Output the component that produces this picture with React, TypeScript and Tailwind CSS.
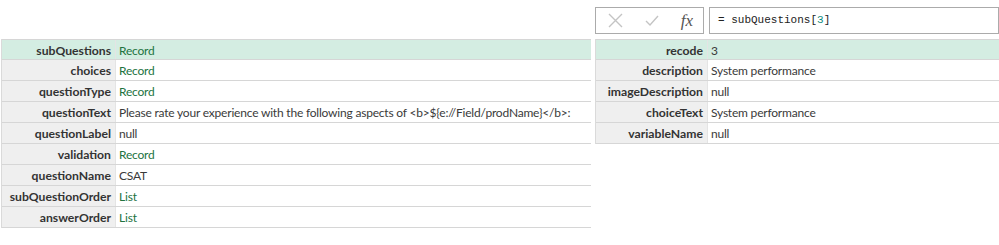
const leftRows = [
  { label: 'subQuestions', value: 'Record', link: true },
  { label: 'choices', value: 'Record', link: true },
  { label: 'questionType', value: 'Record', link: true },
  {
    label: 'questionText',
    value: 'Please rate your experience with the following aspects of <b>${e://Field/prodName}</b>:',
    link: false,
  },
  { label: 'questionLabel', value: 'null', link: false },
  { label: 'validation', value: 'Record', link: true },
  { label: 'questionName', value: 'CSAT', link: false },
  { label: 'subQuestionOrder', value: 'List', link: true },
  { label: 'answerOrder', value: 'List', link: true },
]

const rightRows = [
  { label: 'recode', value: '3', link: false },
  { label: 'description', value: 'System performance', link: false },
  { label: 'imageDescription', value: 'null', link: false },
  { label: 'choiceText', value: 'System performance', link: false },
  { label: 'variableName', value: 'null', link: false },
]

type Row = { label: string; value: string; link: boolean }

const RecordTable = ({ rows, labelWidth }: { rows: Row[]; labelWidth: string }) => {
  return (
    <div className="border-l border-[#dadada]">
      {rows.map((row, index) => {
        const first = index === 0
        return (
          <div
            key={index}
            className={`flex h-[21px] border-b border-[#d6d6d6] ${first ? 'bg-[#d4ede2] border-t' : ''}`}
          >
            <div
              className={`${labelWidth} shrink-0 text-right pr-[4px] font-bold text-[12.2px] text-[#333333] leading-[21px] border-r border-[#e4e4e4] ${
                first ? '' : 'bg-[#efefef]'
              }`}
            >
              {row.label}
            </div>
            <div
              className={`flex-1 pl-[3px] leading-[21px] whitespace-nowrap overflow-hidden tracking-[-0.2px] ${
                first ? '' : 'bg-white'
              } ${row.link ? 'text-[#22733f]' : 'text-[#3a3a3a]'}`}
            >
              {row.value}
            </div>
          </div>
        )
      })}
    </div>
  )
}

export default function App() {
  return (
    <div className="w-[999px] h-[245px] bg-white flex text-[12px] font-['Lato','Noto_Sans',sans-serif] overflow-hidden">
      <div className="w-[591px] pl-[1px] pt-[39px] shrink-0">
        <RecordTable rows={leftRows} labelWidth="w-[114px]" />
      </div>
      <div className="flex-1 pl-[4px] pt-[7px]">
        <div className="flex gap-[5px] h-[27px]">
          <div className="w-[109px] border border-[#ababab] flex items-center justify-between pl-[12px] pr-[10px]">
            <svg width="15" height="15" viewBox="0 0 15 15">
              <path d="M1 1 L14 14 M14 1 L1 14" stroke="#c4c4c4" strokeWidth="1.4" fill="none" />
            </svg>
            <svg width="14" height="12" viewBox="0 0 14 12">
              <path d="M1 6 L5 10 L13 1" stroke="#c4c4c4" strokeWidth="1.4" fill="none" />
            </svg>
            <span className="font-['Liberation_Serif',serif] italic text-[17px] text-[#555555] leading-none">
              fx
            </span>
          </div>
          <div className="flex-1 border border-[#ababab] flex items-center pl-[8px] font-['Liberation_Mono',monospace] text-[11px] text-[#222222]">
            = subQuestions[<span className="text-[#0c8a7d]">3</span>]
          </div>
        </div>
        <div className="pt-[5px]">
          <RecordTable rows={rightRows} labelWidth="w-[112px]" />
        </div>
      </div>
    </div>
  )
}
